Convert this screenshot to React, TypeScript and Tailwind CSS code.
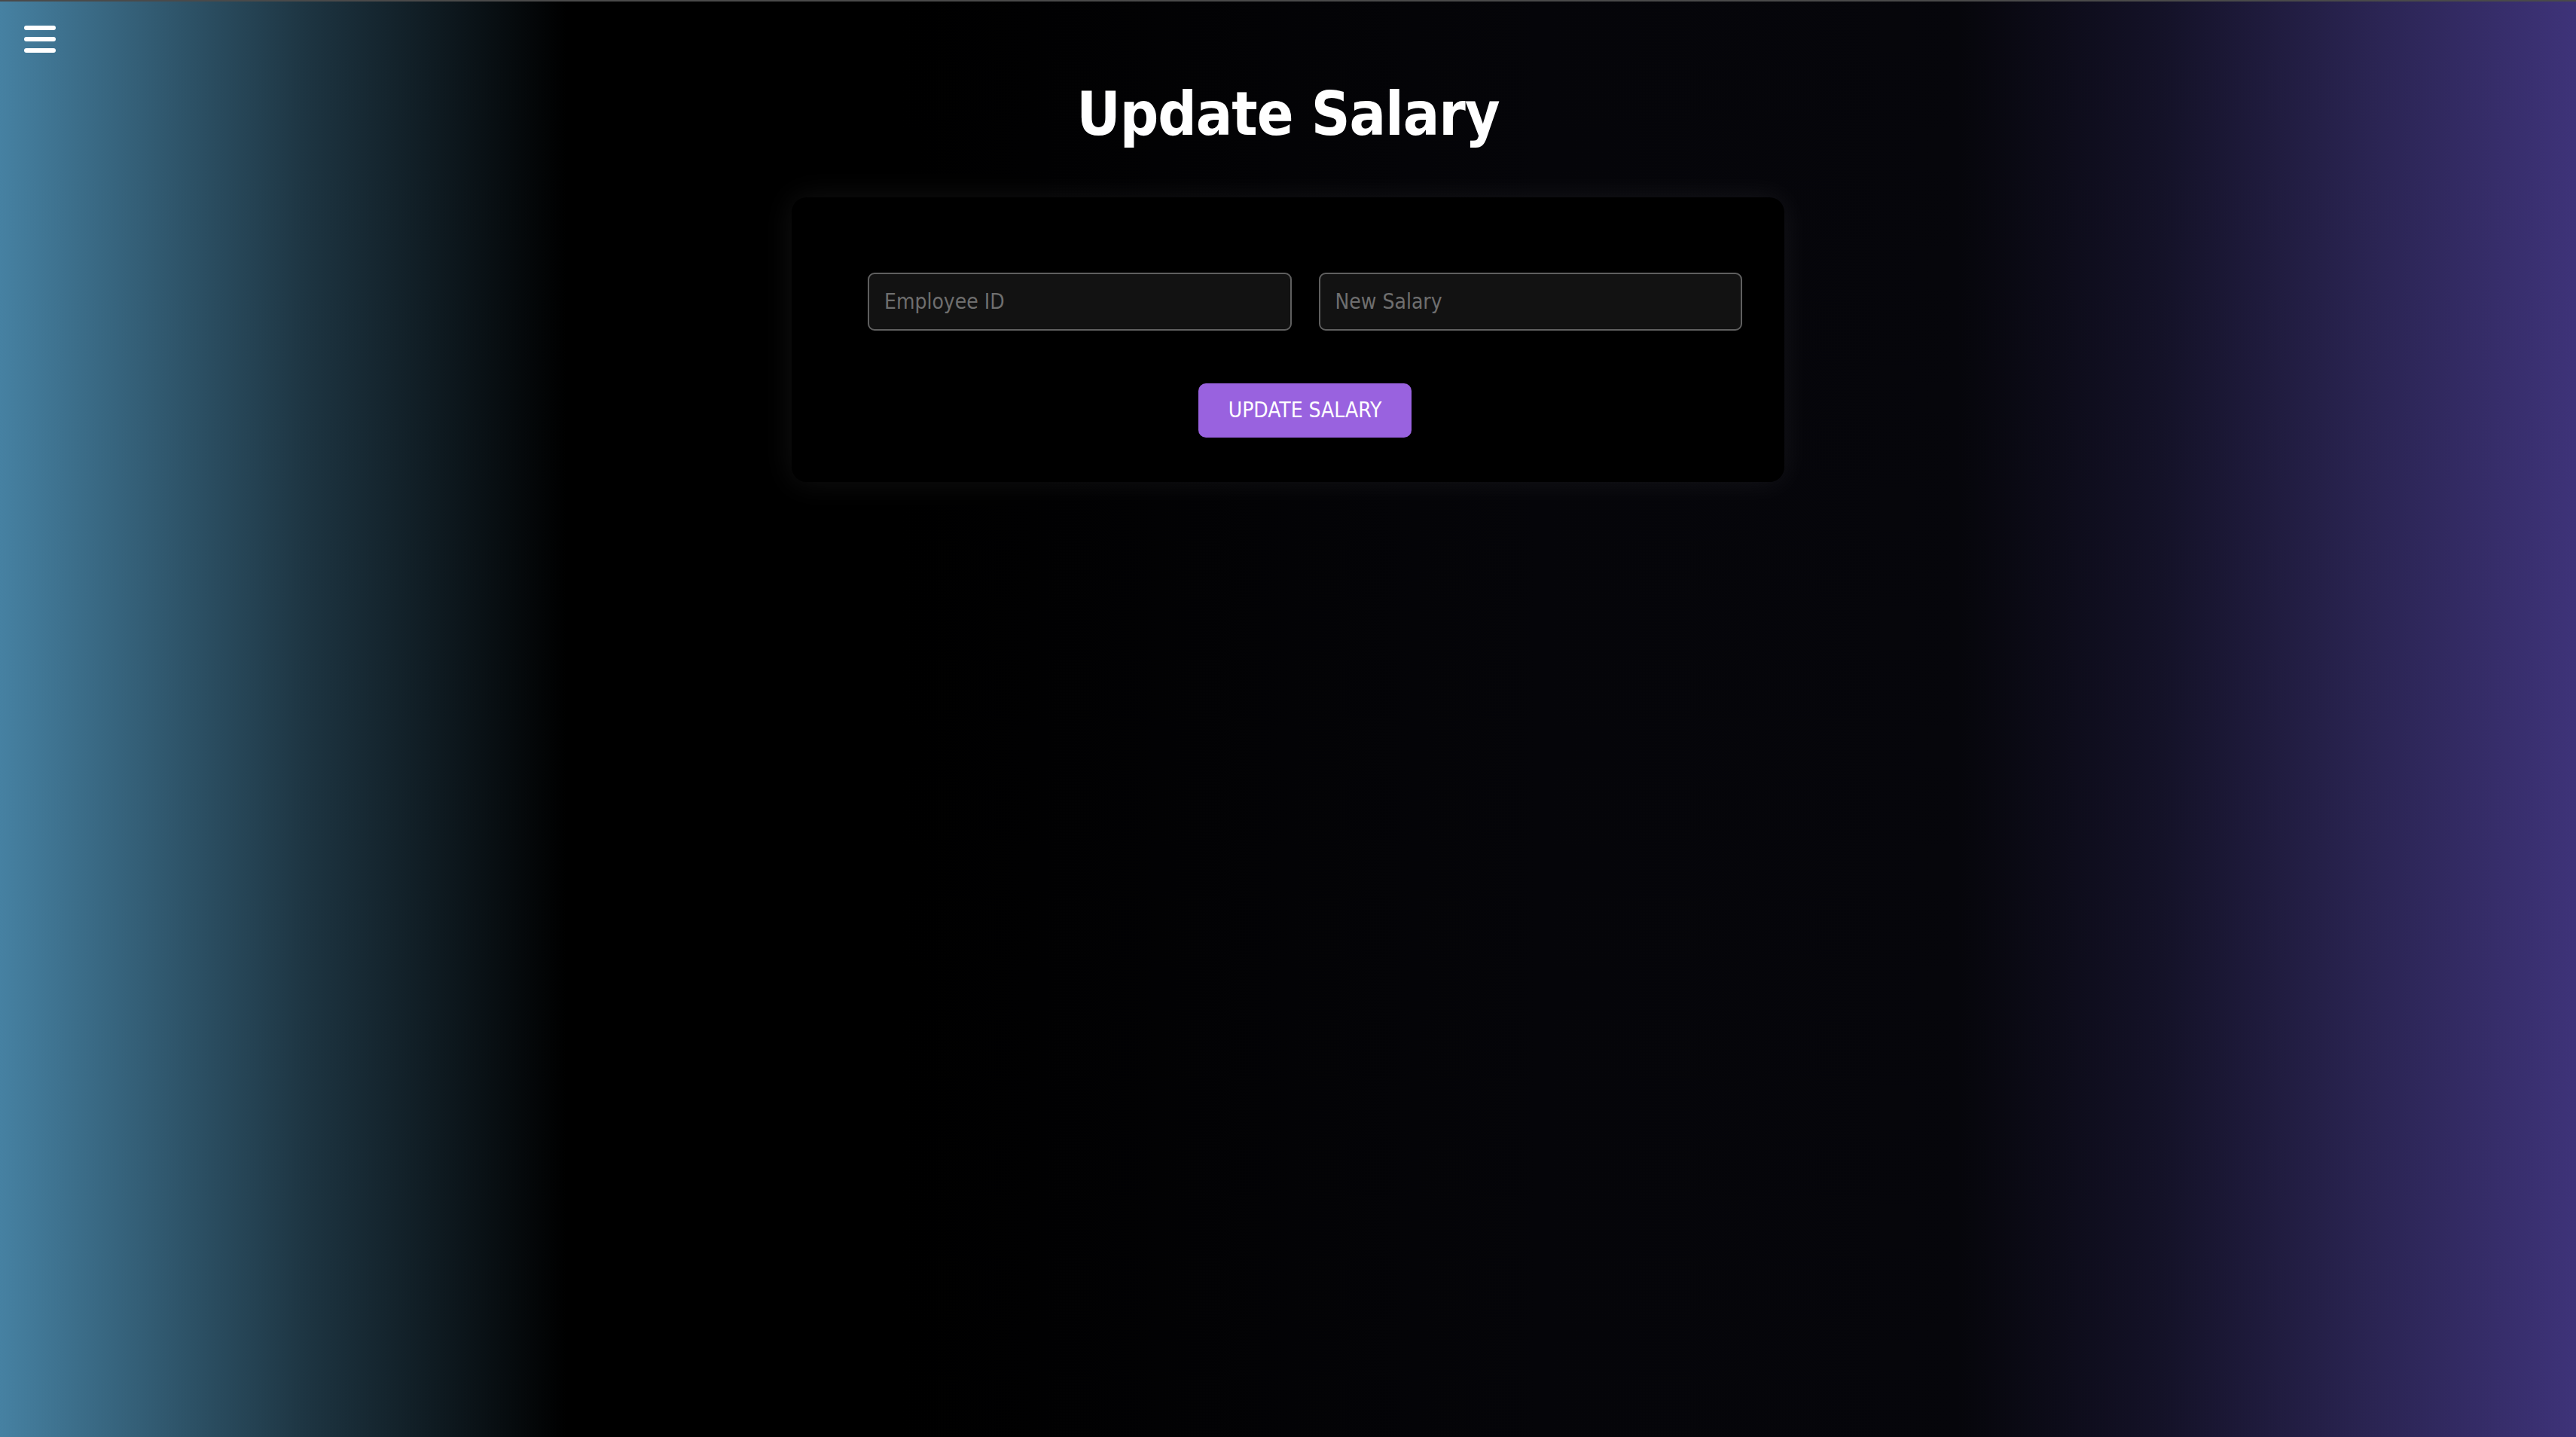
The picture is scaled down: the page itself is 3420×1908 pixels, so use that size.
import React from "react";

export default function App() {
  return (
    <div className="relative h-screen w-full overflow-hidden border-t-2 border-[#4a4a4a] bg-[linear-gradient(90deg,#4681a2_0%,#1d3441_12%,#000_22%,#000_35%,#050509_60%,#06060b_76%,#141228_84%,#2a2452_92%,#3e3379_100%)] font-['DejaVu_Sans_Condensed','DejaVu_Sans',sans-serif]">
      {/* menu */}
      <button className="absolute left-[32px] top-[32px] flex flex-col gap-[9px]">
        <span className="block h-[6px] w-[42px] rounded-full bg-white" />
        <span className="block h-[6px] w-[42px] rounded-full bg-white" />
        <span className="block h-[6px] w-[42px] rounded-full bg-white" />
      </button>

      <div className="flex flex-col items-center">
        <h1 className="mt-[102px] text-[80px] font-bold leading-[96px] tracking-[-1px] text-white">Update Salary</h1>

        {/* form card */}
        <div className="mt-[62px] flex w-[1318px] flex-col items-center rounded-[20px] bg-black pb-[59px] pl-[101px] pr-[56px] pt-[100px] shadow-[0_0_40px_rgba(255,255,255,0.07)]">
          <div className="flex w-full gap-[36px]">
            <input
              placeholder="Employee ID"
              className="h-[77px] flex-1 rounded-[9px] border-2 border-[#5f5f5f] bg-[#121212] px-[20px] text-[28px] text-white outline-none placeholder:text-[#6e6e6e]"
            />
            <input
              placeholder="New Salary"
              className="h-[77px] flex-1 rounded-[9px] border-2 border-[#5f5f5f] bg-[#121212] px-[20px] text-[28px] text-white outline-none placeholder:text-[#6e6e6e]"
            />
          </div>
          <button className="mt-[70px] h-[72px] rounded-[10px] bg-[#9962df] px-[40px] text-[28px] text-white">
            UPDATE SALARY
          </button>
        </div>
      </div>
    </div>
  );
}
